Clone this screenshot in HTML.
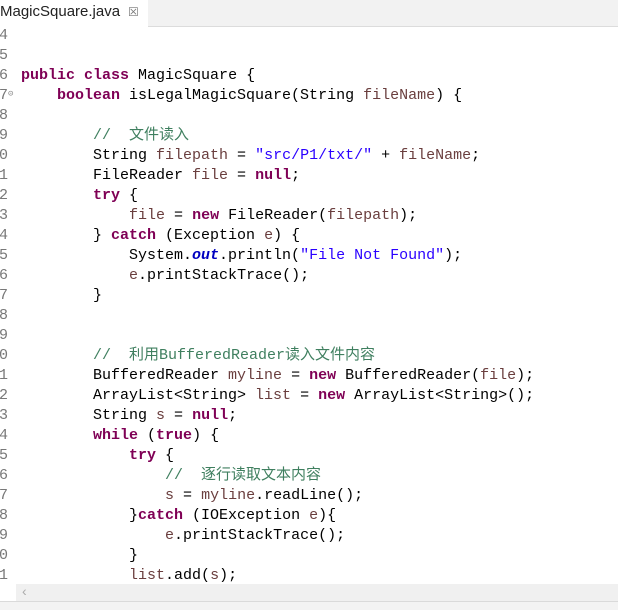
<!DOCTYPE html>
<html><head><meta charset="utf-8"><style>
body{margin:0;width:618px;height:610px;overflow:hidden;background:#fff;position:relative;font-family:"Liberation Sans","Noto Sans CJK SC",sans-serif}
.tabbar{position:absolute;left:0;top:0;width:618px;height:26px;background:#f2f2f2;border-bottom:1px solid #dcdcdc}
.tab{position:absolute;left:0;top:0;width:148px;height:27px;background:#fff;font-size:15px;color:#222;line-height:24px;padding-left:0}
.tab span.x{position:absolute;left:128px;top:0;color:#777;font-size:12px}
.code{position:absolute;left:0;top:26px;font-family:"Liberation Mono","Noto Sans CJK SC",monospace;font-size:15px;line-height:20px;color:#000;white-space:pre}
.ln{position:absolute;left:-1px;color:#787878;width:12px}
.t{position:absolute;left:21px}
.k{color:#7f0055;font-weight:bold}
.s{color:#2a00ff}
.c{color:#3f7f5f}
.v{color:#6a3e3e}
.o{color:#0000c0;font-weight:bold;font-style:italic}
.sb{position:absolute;left:0;top:584px;width:618px;height:17px;background:#f0f0f0;border-bottom:1px solid #dadada}
.bot{position:absolute;left:0;top:602px;width:618px;height:8px;background:#f3f3f3}
</style></head><body>
<div class="tabbar"><div class="tab">MagicSquare.java<span class="x">&#x2612;</span></div></div>
<div class="code">
<div class="ln" style="top:0">4</div>
<div class="ln" style="top:20px">5</div>
<div class="ln" style="top:40px">6</div><div class="t" style="top:40px"><span class="k">public</span> <span class="k">class</span> MagicSquare {</div>
<div class="ln" style="top:60px">7<span style="font-size:9px;color:#888;position:relative;top:-3px">&#x229D;</span></div><div class="t" style="top:60px">    <span class="k">boolean</span> isLegalMagicSquare(String <span class="v">fileName</span>) {</div>
<div class="ln" style="top:80px">8</div>
<div class="ln" style="top:100px">9</div><div class="t" style="top:100px">        <span class="c">//  文件读入</span></div>
<div class="ln" style="top:120px">0</div><div class="t" style="top:120px">        String <span class="v">filepath</span> = <span class="s">"src/P1/txt/"</span> + <span class="v">fileName</span>;</div>
<div class="ln" style="top:140px">1</div><div class="t" style="top:140px">        FileReader <span class="v">file</span> = <span class="k">null</span>;</div>
<div class="ln" style="top:160px">2</div><div class="t" style="top:160px">        <span class="k">try</span> {</div>
<div class="ln" style="top:180px">3</div><div class="t" style="top:180px">            <span class="v">file</span> = <span class="k">new</span> FileReader(<span class="v">filepath</span>);</div>
<div class="ln" style="top:200px">4</div><div class="t" style="top:200px">        } <span class="k">catch</span> (Exception <span class="v">e</span>) {</div>
<div class="ln" style="top:220px">5</div><div class="t" style="top:220px">            System.<span class="o">out</span>.println(<span class="s">"File Not Found"</span>);</div>
<div class="ln" style="top:240px">6</div><div class="t" style="top:240px">            <span class="v">e</span>.printStackTrace();</div>
<div class="ln" style="top:260px">7</div><div class="t" style="top:260px">        }</div>
<div class="ln" style="top:280px">8</div>
<div class="ln" style="top:300px">9</div>
<div class="ln" style="top:320px">0</div><div class="t" style="top:320px">        <span class="c">//  利用BufferedReader读入文件内容</span></div>
<div class="ln" style="top:340px">1</div><div class="t" style="top:340px">        BufferedReader <span class="v">myline</span> = <span class="k">new</span> BufferedReader(<span class="v">file</span>);</div>
<div class="ln" style="top:360px">2</div><div class="t" style="top:360px">        ArrayList&lt;String&gt; <span class="v">list</span> = <span class="k">new</span> ArrayList&lt;String&gt;();</div>
<div class="ln" style="top:380px">3</div><div class="t" style="top:380px">        String <span class="v">s</span> = <span class="k">null</span>;</div>
<div class="ln" style="top:400px">4</div><div class="t" style="top:400px">        <span class="k">while</span> (<span class="k">true</span>) {</div>
<div class="ln" style="top:420px">5</div><div class="t" style="top:420px">            <span class="k">try</span> {</div>
<div class="ln" style="top:440px">6</div><div class="t" style="top:440px">                <span class="c">//  逐行读取文本内容</span></div>
<div class="ln" style="top:460px">7</div><div class="t" style="top:460px">                <span class="v">s</span> = <span class="v">myline</span>.readLine();</div>
<div class="ln" style="top:480px">8</div><div class="t" style="top:480px">            }<span class="k">catch</span> (IOException <span class="v">e</span>){</div>
<div class="ln" style="top:500px">9</div><div class="t" style="top:500px">                <span class="v">e</span>.printStackTrace();</div>
<div class="ln" style="top:520px">0</div><div class="t" style="top:520px">            }</div>
<div class="ln" style="top:540px">1</div><div class="t" style="top:540px">            <span class="v">list</span>.add(<span class="v">s</span>);</div>
</div>
<div class="sb"><div style="position:absolute;left:0;top:0;width:16px;height:17px;background:#fff"></div><span style="position:absolute;left:22px;top:-1px;color:#aaa;font-size:14px">&lsaquo;</span></div>
<div class="bot"></div>
</body></html>
